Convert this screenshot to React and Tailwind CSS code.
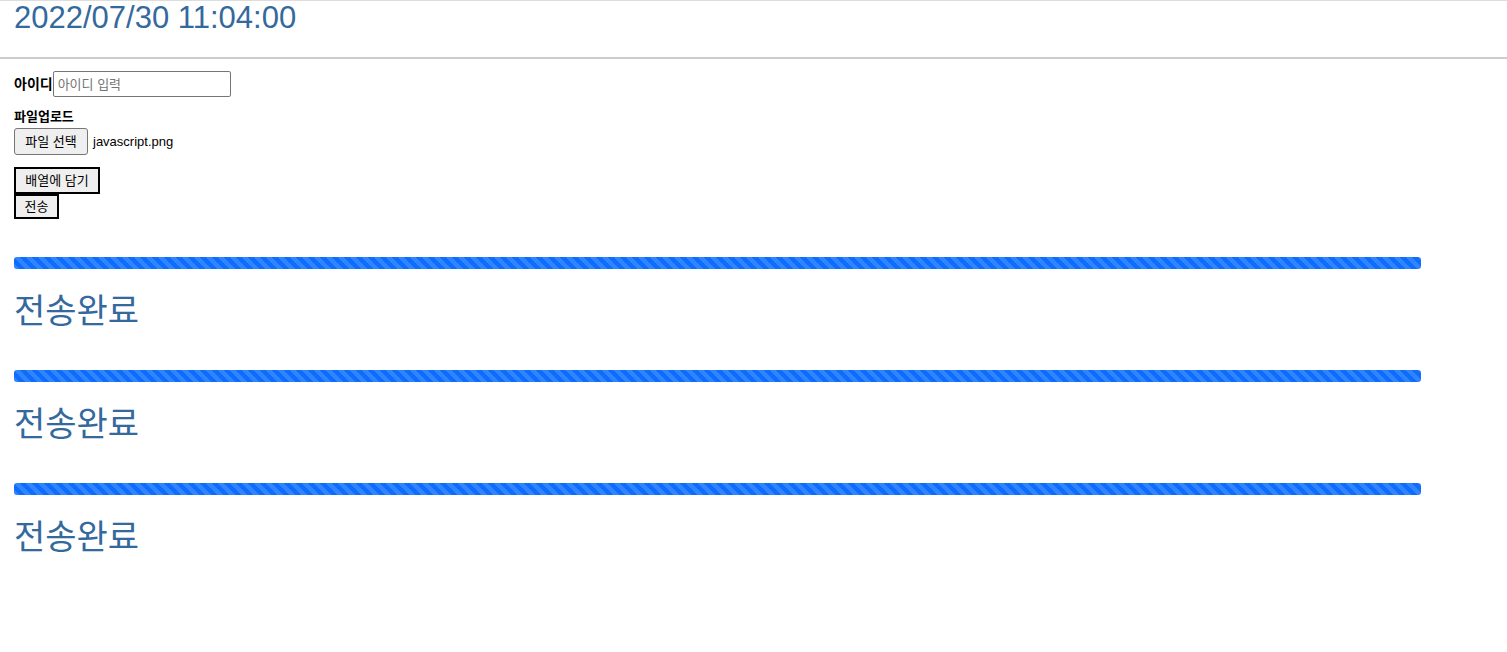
import React from 'react';

const stripe =
  "bg-[#0d6efd] bg-[linear-gradient(45deg,rgba(255,255,255,.15)_25%,transparent_25%,transparent_50%,rgba(255,255,255,.15)_50%,rgba(255,255,255,.15)_75%,transparent_75%,transparent)] bg-[length:12px_12px]";

const Done = () => (
  <div>
    <div className="w-[1407px] h-[12px] rounded-[3px] overflow-hidden bg-[#e9ecef]">
      <div className={`h-full w-full ${stripe}`} />
    </div>
    <h2 className="mt-[22px] text-[34px] leading-[40px] text-[#34699d]">전송완료</h2>
  </div>
);

export default function App() {
  return (
    <div className="min-h-screen bg-white font-['Liberation_Sans','Noto_Sans_CJK_KR',sans-serif] text-black">
      {/* Header */}
      <header className="h-[59px] border-t border-t-[#dddddd] border-b-2 border-b-[#cccccc] px-[14px]">
        <h1 className="text-[31px] leading-[34px] text-[#34699d]">2022/07/30 11:04:00</h1>
      </header>

      <main className="px-[14px]">
        {/* 아이디 */}
        <div className="mt-[12px] flex items-center">
          <label className="text-[14px] font-bold">아이디</label>
          <input
            type="text"
            placeholder="아이디 입력"
            className="w-[178px] h-[26px] border border-[#767676] rounded-[2px] px-[4px] text-[13px] placeholder:text-[#757575] outline-none"
          />
        </div>

        {/* 파일업로드 */}
        <div className="mt-[12px]">
          <div className="text-[13px] font-bold leading-[16px]">파일업로드</div>
          <div className="mt-[3px] flex items-center gap-[5px]">
            <button className="h-[27px] w-[74px] border border-[#767676] rounded-[3px] bg-[#efefef] text-[13px]">
              파일 선택
            </button>
            <span className="text-[13px]">javascript.png</span>
          </div>
        </div>

        {/* buttons */}
        <div className="mt-[12px] flex flex-col items-start">
          <button className="h-[27px] w-[86px] border-2 border-black bg-[#efefef] text-[13px]">배열에 담기</button>
          <button className="h-[25px] w-[45px] border-2 border-black bg-[#efefef] text-[13px]">전송</button>
        </div>

        {/* progress list */}
        <div className="mt-[38px] flex flex-col gap-[39px]">
          <Done />
          <Done />
          <Done />
        </div>
      </main>
    </div>
  );
}
